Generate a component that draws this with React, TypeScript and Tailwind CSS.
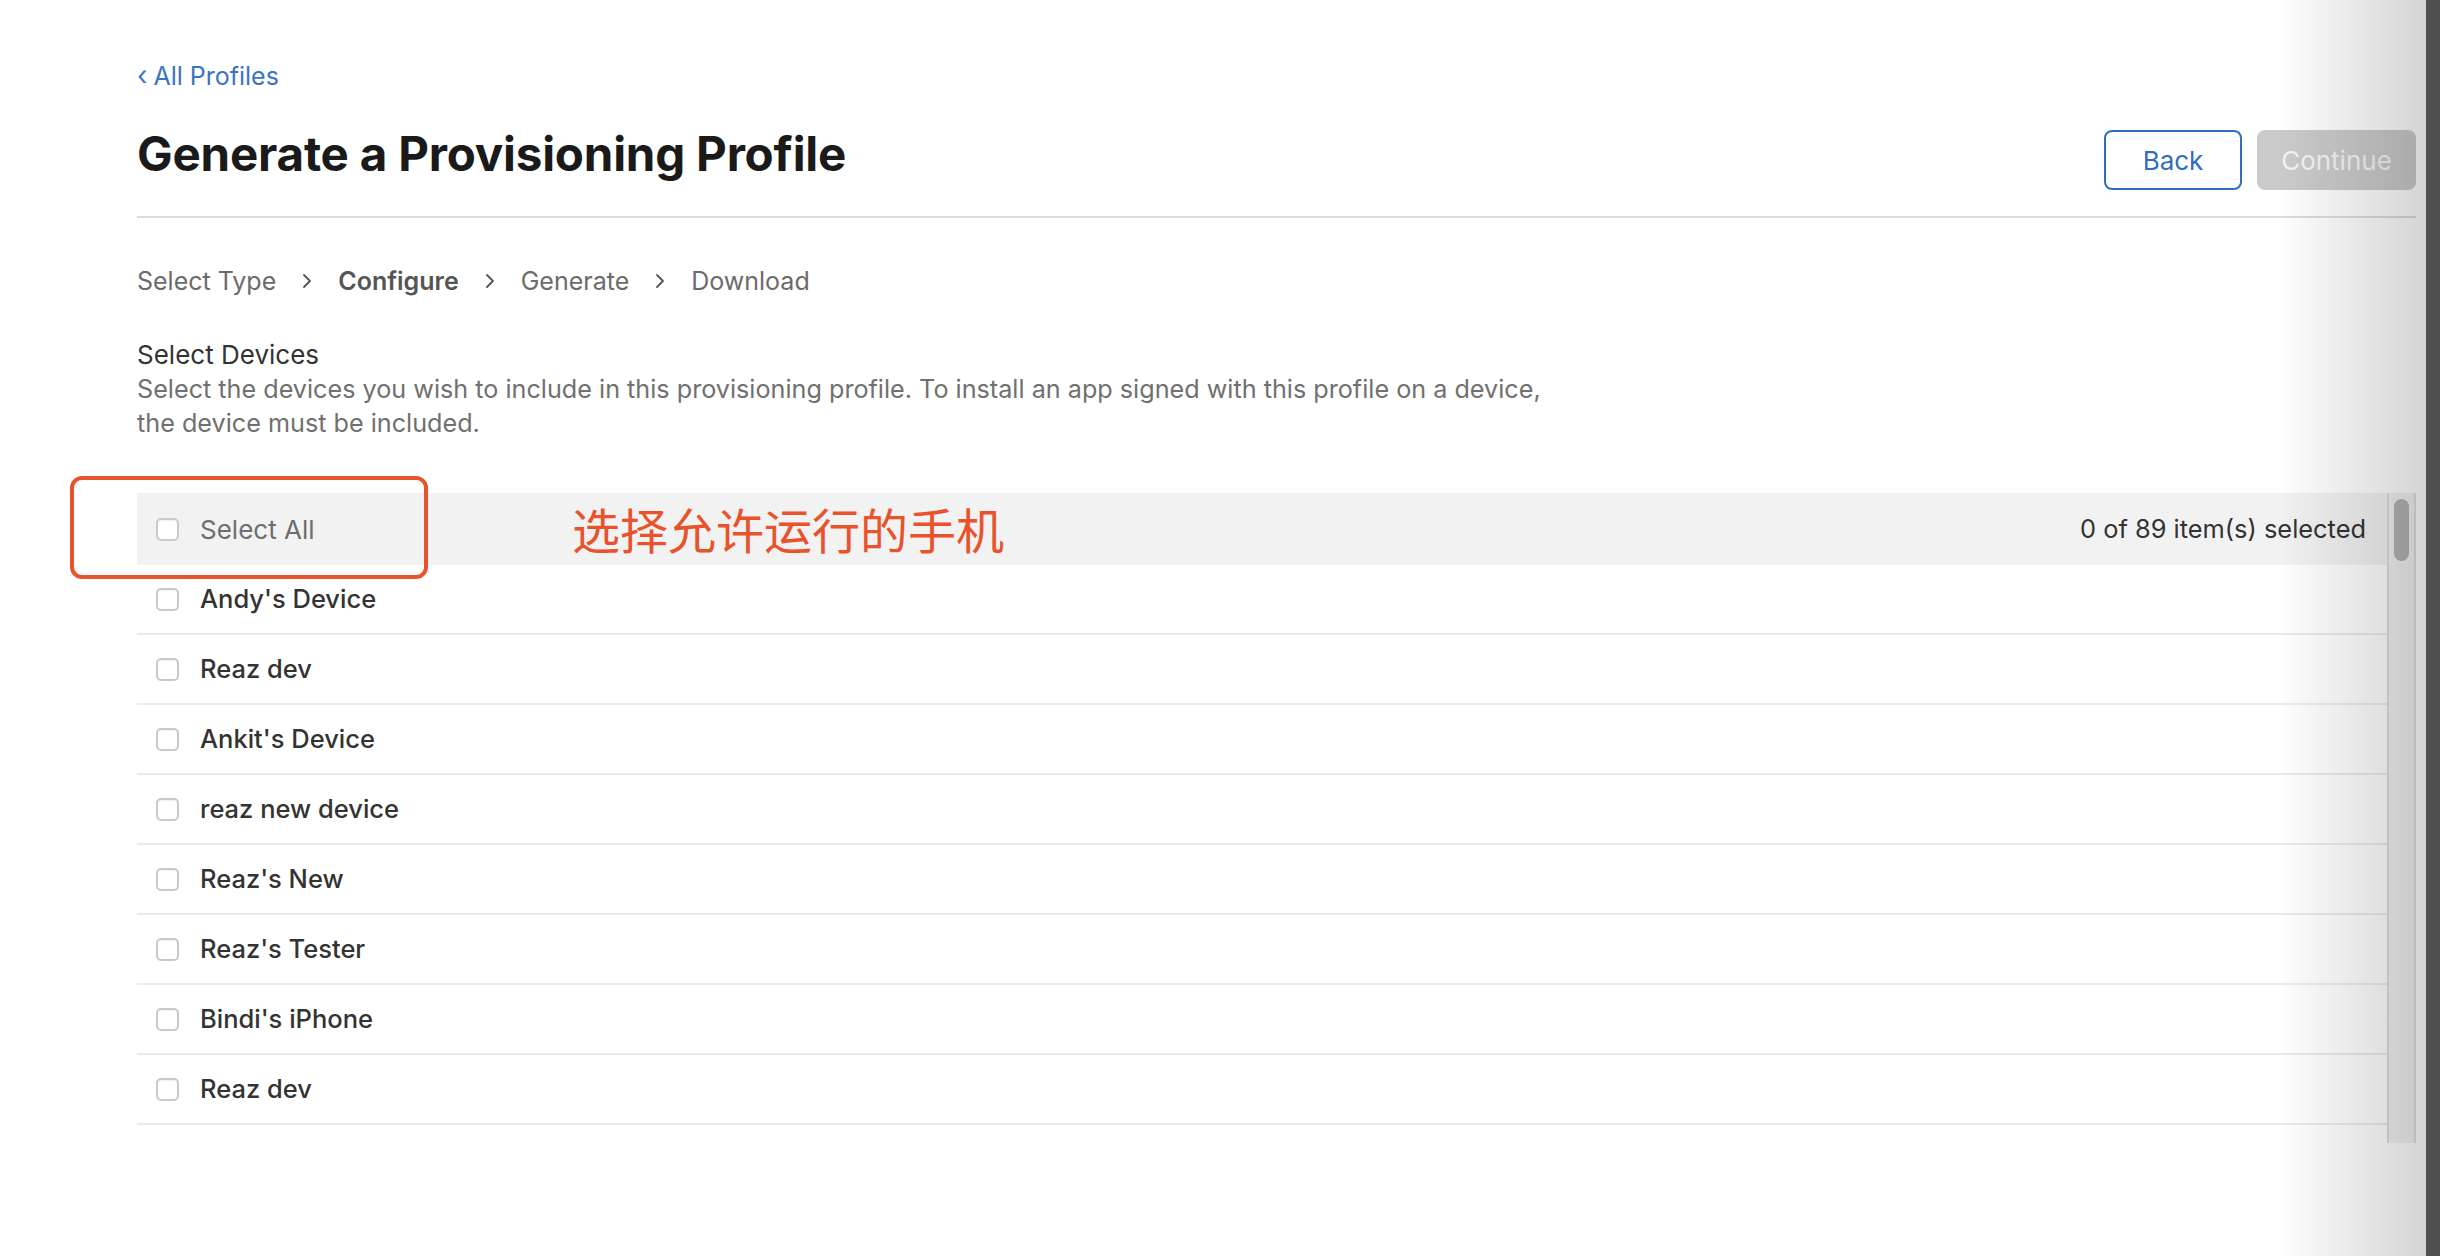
import React from "react";

const devices = [
  "Andy's Device",
  "Reaz dev",
  "Ankit's Device",
  "reaz new device",
  "Reaz's New",
  "Reaz's Tester",
  "Bindi's iPhone",
  "Reaz dev",
];

const Checkbox = () => (
  <span className="inline-block h-[23px] w-[23px] shrink-0 rounded-[5px] border-2 border-[#c9c9c9] bg-white shadow-[inset_0_1px_1px_rgba(0,0,0,0.06)]" />
);

const Chevron = () => (
  <svg width="12" height="18" viewBox="0 0 12 18" className="mx-[25px]">
    <path d="M3 3l6 6-6 6" fill="none" stroke="#555" strokeWidth="1.8" strokeLinecap="round" strokeLinejoin="round" />
  </svg>
);

const App = () => {
  return (
    <div className="relative flex h-[1256px] w-[2440px] overflow-hidden bg-white font-['Inter','Noto_Sans_CJK_SC',sans-serif]">
      <div className="flex-1 pl-[137px] pr-[10px]">
        <div className="pt-[60px]">
          <a className="flex items-center text-[25px] leading-[32px] text-[#3a74c2]">
            <span className="mr-[6px] text-[27px]">‹</span>All Profiles
          </a>
        </div>

        <div className="mt-[34px] flex items-end justify-between border-b-2 border-[#dcdcdc] pb-[26px]">
          <h1 className="pb-[8px] text-[47.5px] font-bold leading-[56px] tracking-[-0.2px] text-[#1a1a1a]">
            Generate a Provisioning Profile
          </h1>
          <div className="flex gap-[15px]">
            <button className="h-[60px] w-[138px] rounded-[8px] border-2 border-[#2f6dbf] text-[26px] text-[#2f6dbf]">
              Back
            </button>
            <button className="h-[60px] w-[159px] rounded-[8px] bg-[#cbcbcb] text-[26px] text-[#f4f4f4]">
              Continue
            </button>
          </div>
        </div>

        <div className="mt-[47px] flex items-center text-[25px] leading-[32px] text-[#6b6b6b]">
          <span>Select Type</span>
          <Chevron />
          <span className="font-semibold text-[#555]">Configure</span>
          <Chevron />
          <span>Generate</span>
          <Chevron />
          <span>Download</span>
        </div>

        <div className="mt-[41px]">
          <div className="text-[26px] leading-[34px] text-[#333]">Select Devices</div>
          <p className="text-[25.2px] leading-[34px] text-[#707070]">
            Select the devices you wish to include in this provisioning profile. To install an app signed with this
            profile on a device,
            <br />
            the device must be included.
          </p>
        </div>

        <div className="mt-[53px] flex">
          <div className="flex-1">
            <div className="relative flex h-[72px] items-center justify-between bg-[#f2f2f2] pl-[19px] pr-[21px]">
              <div className="flex items-center gap-[21px]">
                <Checkbox />
                <span className="text-[26px] text-[#6e6e6e]">Select All</span>
              </div>
              <span className="text-[25.4px] text-[#333]">0 of 89 item(s) selected</span>
              <span className="absolute left-[435px] top-[10px] text-[48px] leading-[58px] text-[#e9532b]">
                选择允许运行的手机
              </span>
            </div>
            {devices.map((d, i) => (
              <div key={i} className="flex h-[70px] items-center gap-[21px] border-b-2 border-[#ebebeb] pl-[19px]">
                <Checkbox />
                <span className="text-[25.5px] font-medium text-[#333]">{d}</span>
              </div>
            ))}
            <div className="h-[18px]" />
          </div>
          <div className="w-[29px] border-x-2 border-[#dedede] bg-[#f1f1f1] pl-[5px] pt-[6px]">
            <div className="h-[62px] w-[15px] rounded-full bg-[#b3b3b3]" />
          </div>
        </div>
      </div>

      <div className="w-[14px] bg-[#505050]" />

      <div className="pointer-events-none absolute right-[14px] top-0 h-full w-[150px] bg-gradient-to-r from-transparent to-[rgba(0,0,0,0.17)]" />
      <div className="pointer-events-none absolute left-[70px] top-[476px] h-[103px] w-[358px] rounded-[12px] border-4 border-[#e9532b]" />
    </div>
  );
};

export default App;
